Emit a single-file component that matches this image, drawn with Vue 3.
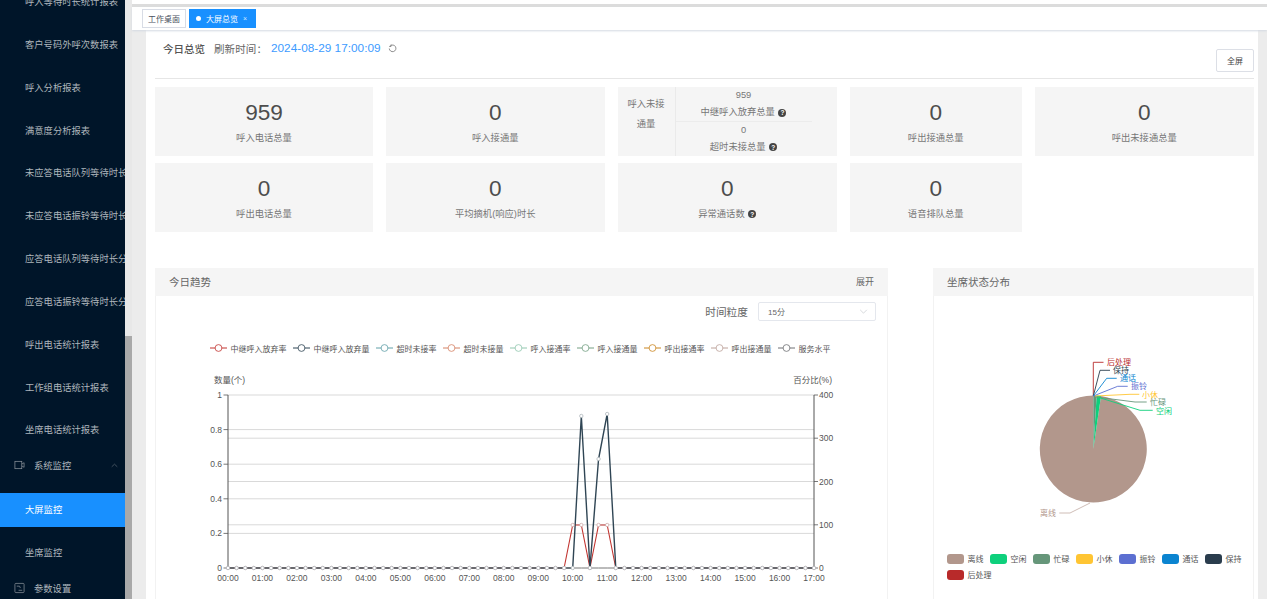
<script setup>
const reports = ['呼入等待时长统计报表','客户号码外呼次数报表','呼入分析报表','满意度分析报表','未应答电话队列等待时长分析报表','未应答电话振铃等待时长分析报表','应答电话队列等待时长分析报表','应答电话振铃等待时长分析报表','呼出电话统计报表','工作组电话统计报表','坐席电话统计报表']
const cards1 = [{ v: '959', l: '呼入电话总量' }, { v: '0', l: '呼入接通量' }]
const cards2 = [{ v: '0', l: '呼出接通总量' }, { v: '0', l: '呼出未接通总量' }]
const cards3 = [{ v: '0', l: '呼出电话总量' }, { v: '0', l: '平均摘机(响应)时长' }, { v: '0', l: '异常通话数', help: true }, { v: '0', l: '语音排队总量' }]
const legend = [['中继呼入放弃率','#c23531'],['中继呼入放弃量','#2f4554'],['超时未接率','#61a0a8'],['超时未接量','#d48265'],['呼入接通率','#91c7ae'],['呼入接通量','#749f83'],['呼出接通率','#ca8622'],['呼出接通量','#bda29a'],['服务水平','#6e7074']]

const x0 = 228, x1 = 814, yB = 568, yT = 395
const step = (x1 - x0) / 68
const px = i => +(x0 + step * i).toFixed(2)
const seriesPoints = over => Array.from({ length: 69 }, (_, i) => ({ x: px(i), y: over[i] ?? yB }))
const toPath = pts => pts.map(p => `${p.x},${p.y}`).join(' ')
const red = seriesPoints({ 40: 525, 41: 525, 42: 568, 43: 525, 44: 525 })
const navy = seriesPoints({ 41: 416, 42: 568, 43: 459, 44: 414 })
const base = seriesPoints({})
const hGrid = [395, 429.6, 438.2, 464.2, 481.5, 498.8, 524.8, 533.4]
const leftTicks = [['1', 395], ['0.8', 429.6], ['0.6', 464.2], ['0.4', 498.8], ['0.2', 533.4], ['0', 568]]
const rightTicks = [['400', 395], ['300', 438.2], ['200', 481.5], ['100', 524.8], ['0', 568]]
const hours = Array.from({ length: 18 }, (_, i) => ({ t: String(i).padStart(2, '0') + ':00', x: px(i * 4) }))

const cx = 1093.3, cy = 449, r = 53.5
const pt = a => { const t = a * Math.PI / 180; return `${(cx + r * Math.sin(t)).toFixed(2)} ${(cy - r * Math.cos(t)).toFixed(2)}` }
const slice = (a, b) => `M${cx} ${cy} L${pt(a)} A${r} ${r} 0 ${b - a > 180 ? 1 : 0} 1 ${pt(b)} Z`
const slices = [
  { d: slice(8.3, 360), c: '#b2978c' },
  { d: slice(3.6, 8.3), c: '#0ed07c' },
  { d: slice(0, 3.6), c: '#66967a' }
]
const labels = [
  { t: '后处理', c: '#b82a2a', d: 'M1093.3 396V362.3H1103.5', x: 1107, y: 362.3 },
  { t: '保持', c: '#2a3d4d', d: 'M1093.3 396L1100 370.3H1110', x: 1113, y: 370.3 },
  { t: '通话', c: '#0b84d0', d: 'M1093.3 396L1106.7 378.3H1116.7', x: 1120, y: 378.3 },
  { t: '振铃', c: '#5c6fd1', d: 'M1093.3 396L1117.7 386.3H1127.7', x: 1131, y: 386.3 },
  { t: '小休', c: '#ffc533', d: 'M1095 396L1130 394.3H1139.3', x: 1142, y: 394.6 },
  { t: '忙碌', c: '#66967a', d: 'M1096 397L1135 402H1146.7', x: 1150, y: 402.3 },
  { t: '空闲', c: '#0ed07c', d: 'M1099 397.5L1140 410.3H1152.7', x: 1156, y: 410.5 }
]
const pieLegend = [['离线','#b2978c'],['空闲','#0ed07c'],['忙碌','#66967a'],['小休','#ffc533'],['振铃','#5c6fd1'],['通话','#0b84d0'],['保持','#2a3d4d'],['后处理','#b82a2a']]
</script>

<template>
  <div class="app">
    <aside class="side">
      <div class="menu">
        <div v-for="r in reports" :key="r" class="mi">{{ r }}</div>
        <div class="group">
          <svg class="gi" viewBox="0 0 12 12" width="12" height="12"><rect x="1" y="2" width="7.5" height="8" fill="none" stroke="currentColor" stroke-width=".8"/><path d="M8.5 5L11 3.5V8.5L8.5 7" fill="none" stroke="currentColor" stroke-width=".8"/></svg>
          <span>系统监控</span>
          <svg class="chev" viewBox="0 0 8 5" width="7" height="5"><path d="M.8 4L4 1L7.2 4" fill="none" stroke="currentColor" stroke-width=".7"/></svg>
        </div>
        <div class="mi active">大屏监控</div>
        <div class="mi">坐席监控</div>
        <div class="group">
          <svg class="gi" viewBox="0 0 12 12" width="12" height="12"><rect x="1" y="1" width="10" height="10" rx="1" fill="none" stroke="currentColor" stroke-width=".8"/><path d="M3 4H6L7 6M5 8.5H9" fill="none" stroke="currentColor" stroke-width=".8"/></svg>
          <span>参数设置</span>
        </div>
      </div>
    </aside>
    <div class="track"><div class="thumb"></div></div>
    <main class="main">
      <div class="top"></div>
      <nav class="tabs">
        <span class="tab">工作桌面</span>
        <span class="tab on"><i class="dot"></i>大屏总览<b class="x">×</b></span>
      </nav>
      <section class="page">
        <header class="head">
          <div class="title">
            <strong>今日总览</strong>
            <span class="rf">刷新时间：</span>
            <span class="date">2024-08-29 17:00:09</span>
            <svg class="reload" viewBox="0 0 10 10" width="9" height="9"><path d="M2.6 2.1A3.7 3.7 0 1 1 1.4 5" fill="none" stroke="#666" stroke-width=".8"/><path d="M3.4 .6V2.7H1.3" fill="none" stroke="#666" stroke-width=".8"/></svg>
          </div>
          <button class="full">全屏</button>
        </header>

        <div class="cards">
          <div v-for="c in cards1" :key="c.l" class="card"><div class="val">{{ c.v }}</div><div class="lab">{{ c.l }}</div></div>
          <div class="card split">
            <div class="sl">呼入未接<br>通量</div>
            <div class="sr">
              <div class="sub first"><div>959</div><div>中继呼入放弃总量 <i class="q">?</i></div></div>
              <div class="sub"><div>0</div><div>超时未接总量 <i class="q">?</i></div></div>
            </div>
          </div>
          <div v-for="c in cards2" :key="c.l" class="card"><div class="val">{{ c.v }}</div><div class="lab">{{ c.l }}</div></div>
          <div v-for="c in cards3" :key="c.l" class="card"><div class="val">{{ c.v }}</div><div class="lab">{{ c.l }} <i v-if="c.help" class="q">?</i></div></div>
        </div>

        <div class="panels">
          <div class="panel trend">
            <div class="ph"><span>今日趋势</span><em>展开</em></div>
            <div class="pb">
              <div class="tools">
                <span class="tl">时间粒度</span>
                <div class="select"><span>15分</span><svg viewBox="0 0 10 6" width="9" height="5"><path d="M1 1L5 5L9 1" fill="none" stroke="#c4c7cc" stroke-width=".8"/></svg></div>
              </div>
              <div class="legend">
                <div v-for="l in legend" :key="l[0]" class="li">
                  <svg width="17" height="10" viewBox="0 0 17 10"><path d="M0 5H17" :stroke="l[1]" stroke-width="1"/><circle cx="8.5" cy="5" r="3.4" fill="#fff" :stroke="l[1]" stroke-width=".8"/></svg>
                  <span>{{ l[0] }}</span>
                </div>
              </div>
              <svg class="chart" viewBox="156 368 731 231" width="731" height="231">
                <text x="214" y="383" class="ax">数量(个)</text>
                <text x="832" y="383" class="ax" text-anchor="end">百分比(%)</text>
                <path v-for="g in hGrid" :key="g" :d="`M${x0} ${g}H${x1}`" stroke="#d9d9d9" stroke-width="1"/>
                <path :d="`M${x0} ${yT}V${yB}M${x1} ${yT}V${yB}`" stroke="#555" stroke-width="1"/>
                <g v-for="t in leftTicks" :key="t[0]">
                  <path :d="`M223.5 ${t[1]}H${x0}`" stroke="#555" stroke-width=".8"/>
                  <text x="222" :y="t[1] + 3" class="ax" text-anchor="end">{{ t[0] }}</text>
                </g>
                <g v-for="t in rightTicks" :key="t[0]">
                  <path :d="`M${x1} ${t[1]}H818`" stroke="#555" stroke-width=".8"/>
                  <text x="819" :y="t[1] + 3" class="ax">{{ t[0] }}</text>
                </g>
                <text v-for="h in hours" :key="h.t" :x="h.x" y="581" class="ax" text-anchor="middle">{{ h.t }}</text>
                <polyline :points="toPath(red)" fill="none" stroke="#c23531" stroke-width="1.1"/>
                <polyline :points="toPath(navy)" fill="none" stroke="#2f4554" stroke-width="1.4"/>
                <polyline :points="toPath(base)" fill="none" stroke="#777" stroke-width="1"/>
                <circle v-for="p in red" :key="'r' + p.x" :cx="p.x" :cy="p.y" r="1.7" fill="#fff" stroke="#c9a0a0" stroke-width=".7"/>
                <circle v-for="p in navy" :key="'n' + p.x" :cx="p.x" :cy="p.y" r="1.7" fill="#fff" stroke="#a5adb3" stroke-width=".7"/>
              </svg>
            </div>
          </div>

          <div class="panel pie">
            <div class="ph"><span>坐席状态分布</span></div>
            <div class="pb">
              <svg class="chart" viewBox="934 296 319 257" width="319" height="257">
                <path v-for="s in slices" :key="s.c" :d="s.d" :fill="s.c"/>
                <g v-for="l in labels" :key="l.t">
                  <path :d="l.d" fill="none" :stroke="l.c" stroke-width=".9"/>
                  <text :x="l.x" :y="l.y + 3" class="pl" :fill="l.c">{{ l.t }}</text>
                </g>
                <path d="M1090 503L1070 513H1059.3" fill="none" stroke="#c9b6ae" stroke-width=".9"/>
                <text x="1040" y="516" class="pl" fill="#b2978c">离线</text>
              </svg>
              <div class="plegend">
                <div v-for="l in pieLegend" :key="l[0]" class="pli"><i class="sw" :style="{ background: l[1] }"></i><span>{{ l[0] }}</span></div>
              </div>
            </div>
          </div>
        </div>
      </section>
    </main>
  </div>
</template>

<style>
html, body { margin: 0; overflow: hidden; }
</style>

<style scoped>
.app { display: flex; width: 1267px; height: 599px; overflow: hidden; background: #ececec; font-family: "Liberation Sans", "Noto Sans CJK SC", sans-serif; }
.side { width: 125px; flex: none; background: #001529; color: #aeb5bc; overflow: hidden; font-size: 9.3px; }
.menu { display: flex; flex-direction: column; margin-top: -19.4px; }
.mi { flex: none; height: 34px; line-height: 34px; margin: 4.43px 0; padding-left: 25px; white-space: nowrap; overflow: hidden; }
.mi.active { background: #1890ff; color: #fff; }
.group { flex: none; position: relative; display: flex; align-items: center; height: 27px; padding-left: 14px; margin-bottom: 10.14px; }
.group span { margin-left: 9px; }
.gi { flex: none; color: #8b939b; width: 11px; }
.chev { position: absolute; left: 111px; top: 11px; color: #6d7780; }
.track { width: 7px; flex: none; background: #e8e8e8; }
.thumb { height: 263px; margin-top: 336px; background: #a9a9a9; }
.main { flex: 1; min-width: 0; display: flex; flex-direction: column; }
.top { height: 4px; flex: none; background: #fff; border-bottom: 3px solid #dcdcdc; }
.tabs { height: 23px; flex: none; display: flex; align-items: center; gap: 3px; padding: 0 0 1px 10px; box-sizing: border-box; background: #fff; box-shadow: 0 1px 2px #d4d9e2; position: relative; }
.tab { width: 44px; height: 19px; box-sizing: border-box; padding: 0 5px; display: flex; align-items: center; border: 1px solid #d8dce5; font-size: 8px; color: #495060; background: #fff; }
.tab.on { width: 67px; background: #1890ff; border-color: #1890ff; color: #fff; padding-left: 6px; }
.dot { flex: none; width: 5px; height: 5px; border-radius: 50%; background: #fff; margin-right: 5px; }
.x { font-weight: 400; margin-left: 5px; font-size: 7px; color: #cfe6ff; }
.page { flex: 1; min-height: 0; margin-left: 14px; margin-right: 9px; padding: 1px 4px 0 9px; background: #fff; overflow: hidden; }
.head { height: 47px; display: flex; justify-content: space-between; align-items: flex-start; border-bottom: 1px solid #e6e6e6; }
.title { display: flex; align-items: center; height: 20px; margin-top: 7px; padding-left: 8px; font-size: 10.5px; color: #666; }
.title strong { font-weight: 500; color: #555; margin-right: 9px; }
.date { color: #3d9bff; font-size: 11.8px; }
.rf { width: 57px; font-size: 10.5px; letter-spacing: .1px; }
.reload { margin-left: 7px; }
.full { width: 38px; height: 23px; margin-top: 18px; padding: 0; border: 1px solid #dcdfe6; border-radius: 2px; background: #fff; font: 8px "Liberation Sans", "Noto Sans CJK SC", sans-serif; color: #444; }
.cards { display: grid; grid-template-columns: 218px 219.5px 219.5px 172.5px 219.5px; grid-auto-rows: 69px; gap: 7px 12.5px; margin-top: 8px; }
.card { background: #f5f5f5; display: flex; flex-direction: column; align-items: center; color: #777; font-size: 9.3px; }
.val { font-size: 22.6px; line-height: 26px; margin-top: 13px; color: #4d4d4d; }
.lab { margin-top: 5.5px; line-height: 13px; }
.q { display: inline-flex; align-items: center; justify-content: center; width: 8px; height: 8px; border-radius: 50%; background: #444; color: #fff; font-size: 6.5px; font-style: normal; font-weight: 700; margin-left: 1px; }
.split { flex-direction: row; align-items: stretch; }
.sl { width: 58px; flex: none; box-sizing: border-box; border-right: 1px solid #eaeaea; padding-top: 7px; text-align: center; line-height: 20px; }
.sr { width: 136px; flex: none; }
.sub { height: 34.5px; text-align: center; line-height: 17px; }
.sub.first { border-bottom: 1px solid #ececec; box-sizing: border-box; }
.panels { display: flex; justify-content: space-between; margin-top: 36px; }
.panel { box-sizing: border-box; border: 1px solid #f2f2f2; border-top: 0; height: 340px; }
.trend { width: 733px; }
.pie { width: 321px; }
.ph { height: 28px; box-sizing: border-box; padding: 0 14px 1px; background: #f5f5f5; display: flex; justify-content: space-between; align-items: center; margin: 0 -1px; font-size: 10.5px; color: #666; }
.ph em { font-style: normal; font-size: 9px; }
.tools { display: flex; justify-content: flex-end; align-items: center; height: 19px; margin-top: 6px; padding-right: 11px; }
.tl { font-size: 10.7px; color: #666; margin-right: 10px; }
.select { width: 118px; height: 19px; box-sizing: border-box; border: 1px solid #e4e7ed; border-radius: 2px; display: flex; justify-content: space-between; align-items: center; padding: 0 7px 0 9px; font-size: 8px; color: #666; }
.legend { display: flex; gap: 6.5px; height: 12px; margin-top: 21px; padding-left: 54px; }
.li { display: flex; align-items: center; gap: 3.5px; font-size: 8px; color: #555; white-space: nowrap; }
.chart { display: block; }
.legend + .chart { margin-top: 14px; }
.ax { font-size: 8.5px; fill: #555; }
.pl { font-size: 8px; }
.plegend { display: flex; flex-wrap: wrap; gap: 5px 6.5px; padding-left: 13px; }
.pli { display: flex; align-items: center; gap: 3.5px; height: 11px; font-size: 8px; color: #555; white-space: nowrap; }
.sw { width: 17px; height: 10px; border-radius: 3px; }
</style>
